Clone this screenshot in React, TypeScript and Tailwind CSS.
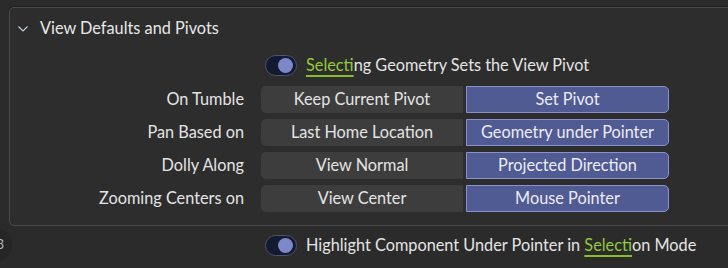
import React from "react";

const rows = [
  { label: "On Tumble", left: "Keep Current Pivot", right: "Set Pivot" },
  { label: "Pan Based on", left: "Last Home Location", right: "Geometry under Pointer" },
  { label: "Dolly Along", left: "View Normal", right: "Projected Direction" },
  { label: "Zooming Centers on", left: "View Center", right: "Mouse Pointer" },
];

const Toggle = () => (
  <div className="flex h-[21px] w-[32px] items-center justify-end rounded-full border border-[#4f5468] bg-[#141a31] pr-[3px]">
    <div className="h-[15px] w-[15px] rounded-full bg-[#7d88c9]" />
  </div>
);

const Select = () => (
  <span className="text-[#95c93a] underline decoration-[#86bd28] decoration-2 underline-offset-[4px]">
    Select
  </span>
);

const App = () => {
  return (
    <div
      className="h-[268px] w-[728px] overflow-hidden bg-[#2b2b2b] text-[16.3px] text-[#e4e4e4]"
      style={{ fontFamily: "Lato, 'Noto Sans', sans-serif" }}
    >
      <div className="pt-[7px]">
        <div className="ml-[9px] w-[740px] rounded-[5px] border border-[#4a4a4a] bg-[#2d2d2d] pb-[13px] shadow-[0_-1px_0_#222]">
          {/* header */}
          <div className="flex h-[41px] items-center">
            <svg width="10" height="6" viewBox="0 0 10 6" className="ml-[8px]">
              <path d="M0.5 0.5 L5 5 L9.5 0.5" fill="none" stroke="#c9d2e0" strokeWidth="1.1" />
            </svg>
            <span className="ml-[12px] text-[#e8e8e8]">View Defaults and Pivots</span>
          </div>

          {/* toggle row */}
          <div className="mt-[1px] flex h-[31px] items-center pl-[255px]">
            <Toggle />
            <span className="ml-[9px]">
              <Select />
              ing Geometry Sets the View Pivot
            </span>
          </div>

          {/* options */}
          <div className="mt-[5px] flex flex-col gap-[6px]">
            {rows.map((row) => (
              <div key={row.label} className="flex items-center">
                <div className="w-[234px] text-right">{row.label}</div>
                <div className="ml-[17px] flex gap-[3px]">
                  <div className="flex h-[27px] w-[202px] items-center justify-center rounded-l-[5px] bg-[#3d3d3d]">
                    {row.left}
                  </div>
                  <div className="flex h-[27px] w-[203px] items-center justify-center rounded-r-[5px] border border-[#8a92cc] bg-[#505a93] text-[#ececf4]">
                    {row.right}
                  </div>
                </div>
              </div>
            ))}
          </div>
        </div>

        {/* bottom row */}
        <div className="relative flex h-[38px] items-center pl-[265px]">
          <div className="absolute left-[-22px] top-[2px] flex h-[34px] w-[34px] items-center justify-end rounded-full bg-[#262626] pr-[8px] text-[13px] text-[#bbbbbb]">
            3
          </div>
          <Toggle />
          <span className="ml-[9px]">
            Highlight Component Under Pointer in <Select />
            ion Mode
          </span>
        </div>
      </div>
    </div>
  );
};

export default App;
